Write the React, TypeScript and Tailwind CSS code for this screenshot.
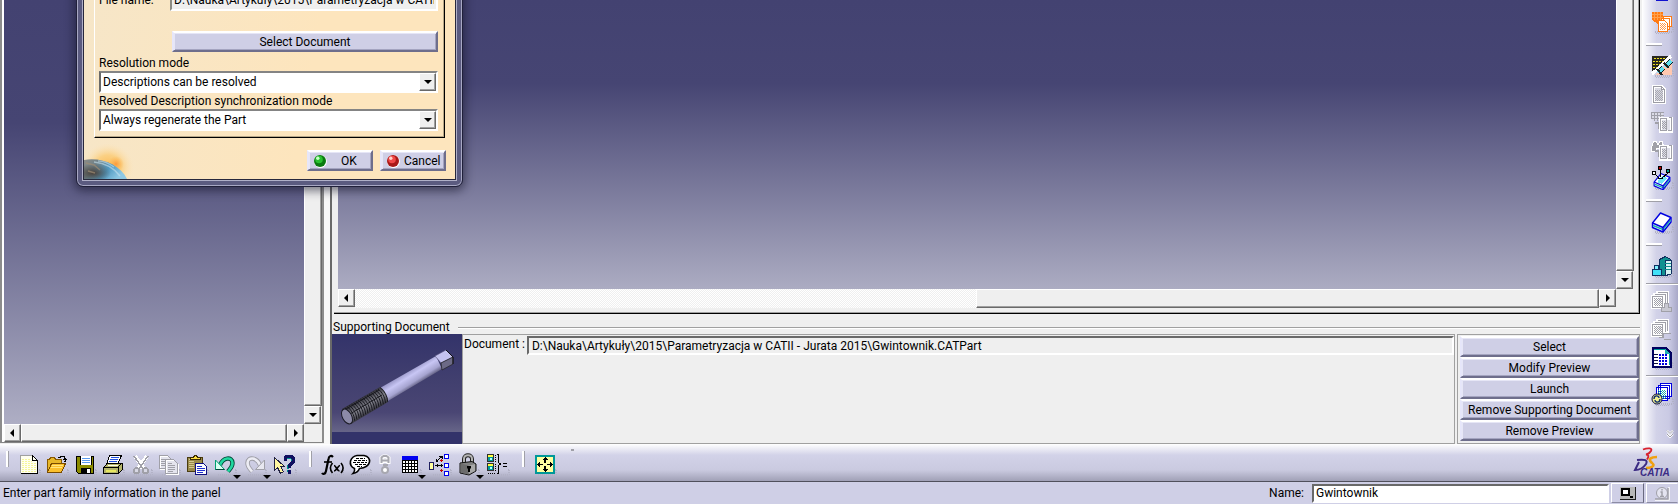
import React from "react";

type Kids = { children?: React.ReactNode };

const RAISED =
  "border border-t-white border-l-white border-r-[#696969] border-b-[#696969] bg-[#efefef] shadow-[inset_-1px_-1px_0_#a0a0a0]";
const PUSH =
  "border-2 border-t-white border-l-[#e6e6fa] border-r-[#6e6e8c] border-b-[#6e6e8c] bg-[#cfcfe6] shadow-[inset_1px_1px_0_#e6e6f6,inset_-1px_-1px_0_#a4a4c0]";

function Icon({ children, shade = true }: Kids & { shade?: boolean }) {
  return (
    <svg width="24" height="24" viewBox="0 0 24 24" shapeRendering="crispEdges" aria-hidden="true" className="shrink-0">
      {shade && <path d="M5 21h17v-5h1v6H5zM6 23h14" fill="none" stroke="#b2b2c6" strokeDasharray="1 1" />}
      {children}
    </svg>
  );
}

/* ---------- bottom toolbar icons ---------- */

const NewIcon = () => (
  <Icon>
    <path d="M4 2.5h11.5l5 5V20.5H3.5V2.500z" fill="#fffff0" />
    <path d="M5 6h9M5 8h10M5 10h14M5 12h14M5 14h14M5 16h14M5 18h14" stroke="#f6f69a" strokeDasharray="2 1" />
    <path d="M3.500 20V2.500H15.500" fill="none" stroke="#a0a0a0" />
    <path d="M15.500 2.500v5h5M15.500 2.500l5 5V20.500H3.500" fill="none" stroke="#000" />
  </Icon>
);
const OpenIcon = () => (
  <Icon>
    <path d="M2.500 19V6.500h2l1-2h4l1 2h6V10" fill="#e8b82a" stroke="#8a5a00" />
    <path d="M2.500 19.500l4-9h14l-4 9z" fill="#fbc02d" stroke="#7a4c00" />
    <path d="M7 12h11M6 14h11" stroke="#ffe680" />
    <path d="M13 4.500h2l1-1h3l1 2v2M18 6.500h4M19 8.500h2" fill="none" stroke="#000" />
  </Icon>
);
const SaveIcon = () => (
  <Icon>
    <path d="M3.500 3.500h17v17h-15l-2-2z" fill="#8c8c00" stroke="#000" />
    <path d="M7 3h11v9H7z" fill="#fff" />
    <path d="M7.500 12V3M18.500 12V3" stroke="#000" />
    <path d="M9 5.500h8M9 7.500h8M9 9.500h8" stroke="#5b9bf0" />
    <path d="M8 15h10v5H8z" fill="#000" />
    <path d="M14 16h3v4h-3z" fill="#fff" />
  </Icon>
);
const PrintIcon = () => (
  <Icon>
    <path d="M8.500 2.500h12l-4 9h-11z" fill="#fff" stroke="#000" />
    <path d="M10 4.500h8M9 6.500h8M8 8.500h8" stroke="#2050e0" strokeWidth="1" />
    <path d="M2.500 14.500l4-4h15v6l-4 4h-15z" fill="#b5b56a" stroke="#000" />
    <path d="M3 14.500h14v5M17 14l4-4" fill="none" stroke="#000" />
    <path d="M5 17.500h10" stroke="#e8e860" strokeWidth="2" />
    <path d="M7 12.500h10" stroke="#fffff0" />
  </Icon>
);
const CutIcon = () => (
  <Icon>
    <path d="M6 3l9 13M18 3L9 16" stroke="#fff" strokeWidth="4" />
    <path d="M5 3l9 13M19 3L10 16" stroke="#a0a0a8" strokeWidth="1.500" />
    <circle cx="7.500" cy="17.500" r="2.500" fill="#d8d8e4" stroke="#a0a0a8" strokeWidth="2" />
    <circle cx="16.500" cy="17.500" r="2.500" fill="#d8d8e4" stroke="#a0a0a8" strokeWidth="2" />
  </Icon>
);
const CopyIcon = () => (
  <Icon>
    <path d="M3.500 3.500h8l3 3v10h-11z" fill="#e4e4ee" stroke="#fff" />
    <path d="M2.500 2.500h8l3 3v10h-11zM4 6.500h5M4 8.500h7M4 10.500h7M4 12.500h7" fill="none" stroke="#a0a0a8" />
    <path d="M9.500 7.500h8l4 4v10h-12z" fill="#e4e4ee" stroke="#fff" />
    <path d="M8.500 6.500h8l4 4v10h-12zM11 10.500h4M11 12.500h7M11 14.500h7M11 16.500h7M11 18.500h5" fill="none" stroke="#a0a0a8" />
  </Icon>
);
const PasteIcon = () => (
  <Icon>
    <path d="M2.500 4.500h15v14h-15z" fill="#9a8a4a" stroke="#4a3c10" />
    <path d="M4 6.500h5M4 8.500h5M4 10.500h5M4 12.500h5M4 14.500h5" stroke="#d4c890" />
    <path d="M5.500 6.500v-2h3l1-2h2l1 2h3v2z" fill="#ffe040" stroke="#3a2c00" />
    <path d="M10.500 10.500h8l3 3v8h-11z" fill="#fff" stroke="#101080" />
    <path d="M12 13.500h5M12 15.500h8M12 17.500h8M12 19.500h6" stroke="#2030d0" />
  </Icon>
);
const UndoIcon = () => (
  <Icon>
    <g shapeRendering="auto">
      <path d="M7 12C10 4.500 19 3 19.500 10c0 4-2.500 6-4.500 8.500" fill="none" stroke="#004838" strokeWidth="4.400" />
      <path d="M7 12C10 4.500 19 3 19.500 10c0 4-2.500 6-4.500 8.500" fill="none" stroke="#20d8a0" strokeWidth="2.600" />
      <path d="M2.500 7v9.500h9z" fill="#d8fff0" stroke="#00a070" />
      <path d="M2.500 16.500h9" stroke="#004838" />
    </g>
  </Icon>
);
const RedoIcon = () => (
  <Icon>
    <g shapeRendering="auto">
      <path d="M17 12C14 4.500 5 3 4.500 10c0 4 2.500 6 4.500 8.500" fill="none" stroke="#9c9ca4" strokeWidth="4.400" />
      <path d="M17 12C14 4.500 5 3 4.500 10c0 4 2.500 6 4.500 8.500" fill="none" stroke="#ececf4" strokeWidth="2.600" />
      <path d="M21.500 7v9.500h-9z" fill="#e8e8f0" stroke="#a0a0a8" />
    </g>
  </Icon>
);
const HelpIcon = () => (
  <Icon>
    <path d="M12 8V5h7v5l-4 3v3M14 18h3v2" fill="none" stroke="#009090" strokeWidth="2" />
    <path d="M12 8V5l2-2h4l2 2v4l-4 4v2M16 17v4" fill="none" stroke="#101060" strokeWidth="3" />
    <path d="M1.500 4.500v13l3-3 3 6 3-2-3-5h4z" fill="#fff6a0" stroke="#202040" />
  </Icon>
);
const FxIcon = () => (
  <Icon>
    <g shapeRendering="auto" fill="none" stroke="#000">
      <path d="M13 4c-2-2-4-1-4.500 2L6 18c-.5 3-3 3.500-4 2" strokeWidth="2.200" />
      <path d="M4 9h8" strokeWidth="1.600" />
      <path d="M12.500 10c-2.500 3-2.500 7 0 10M21 10c2.500 3 2.500 7 0 10" strokeWidth="1.600" />
      <path d="M14 12.500c2 0 3 5.500 5.500 5.500M20 12.500c-2 0-3.500 5.500-6 5.500" strokeWidth="1.700" />
    </g>
  </Icon>
);
const CommentIcon = () => (
  <Icon>
    <path
      d="M9 2.500h7c4 1 6 3 5.500 6.500-1 4-5 6-10 6.500-1 2.500-3.500 4.500-6.500 5 1.500-1.500 2-3 1.500-5C3 14 2 11 2.500 8c1-3 3-5 6.500-5.500z"
      fill="#fff"
      stroke="#000"
      strokeWidth="1.600"
      shapeRendering="auto"
    />
    <path d="M8 5.500h9M6 7.500h13M5 9.500h14M7 11.500h11M9 13.500h5" stroke="#000" strokeDasharray="3 1" />
  </Icon>
);
const LinkIcon = () => (
  <Icon shade={false}>
    <g shapeRendering="auto">
      <path d="M8.500 11V5l2-1.500h3l2 1.500v6M9 8h7" fill="none" stroke="#fff" strokeWidth="4" />
      <path d="M8.500 10V4.500l2-1.500h3l2 1.500V10M9 7.500h6M10 12h5" fill="none" stroke="#a8a8b0" strokeWidth="2" />
      <circle cx="12" cy="17" r="3" fill="#fff" stroke="#a8a8b0" strokeWidth="2" />
    </g>
  </Icon>
);
const TableIcon = () => (
  <Icon>
    <path d="M4 3h16v4H4z" fill="#0000f0" />
    <path d="M4.500 7.500h15v12h-15z" fill="#fff" stroke="#000" />
    <path d="M7.500 7v12M10.500 7v12M13.500 7v12M16.500 7v12M4 10.500h16M4 13.500h16M4 16.500h16" stroke="#000" />
  </Icon>
);
const TreeIcon = () => (
  <Icon>
    <path d="M1.500 9.500h4v7h-4z" fill="#ffffa0" stroke="#202060" />
    <path d="M16.500 1.500h4v4h-4zM16.500 10.500h4v4h-4zM16.500 18.500h4v4h-4z" fill="#fff" stroke="#0000f0" />
    <path d="M8 8.500l6-5M14 3v3M14 3h-3M7 12.500h8M9 11v3M13 11v3M8 8v-2M8 8h2" fill="none" stroke="#000" />
    <path d="M12 7.500h3M13.500 6v3M12 17.500h3M13.500 16v3" stroke="#c00000" />
  </Icon>
);
const LockIcon = () => (
  <Icon>
    <g shapeRendering="auto">
      <path d="M8 11V6c0-5 8-5 8 0v4" fill="none" stroke="#202020" strokeWidth="4" />
      <path d="M8 11V6c0-5 8-5 8 0v4" fill="none" stroke="#b4b4b4" strokeWidth="2" />
      <path d="M4 10l12-1.500 4 2.500v7l-7 4-9-2z" fill="#808080" stroke="#101010" />
      <path d="M4.500 10.500l8 2v9l-8-2z" fill="#6c6c6c" />
      <path d="M12 13l7-2v7l-6 3z" fill="#a8a8a8" />
      <path d="M11 13h4v2l-1 1v3h-2v-3l-1-1z" fill="#000" />
    </g>
  </Icon>
);
const BraceIcon = () => (
  <Icon>
    <path d="M1.500 1.500h6v7h-6zM1.500 10.500h6v7h-6z" fill="#009898" stroke="#303030" />
    <path d="M2 2.500h5M2 11.500h5" stroke="#ffff40" strokeWidth="2" />
    <path d="M4 5h2v2H4zM4 14h2v2H4z" fill="#b0ffff" />
    <path d="M9.500 2v7M9.500 11v7M2 20.500h7" fill="none" stroke="#000" strokeDasharray="1 1" />
    <path d="M11 1.500h1.500v8l2 1.500-2 1.500v8H11M17 10.500h4M17 13.500h4" fill="none" stroke="#000" />
  </Icon>
);
const FitIcon = () => (
  <Icon>
    <path d="M3 3h18v17H3z" fill="#ffffa0" stroke="#009898" strokeWidth="2" />
    <path d="M12 5v5M12 13v5M5 11.500h5M14 11.500h5" stroke="#000" strokeWidth="1.500" />
    <path d="M12 4l3 3H9zM12 19l3-3H9zM4 11.500l3-3v6zM20 11.500l-3-3v6z" fill="#000" />
  </Icon>
);

/* ---------- side toolbar icons ---------- */

const Dots = ({ x, y, w, h, c }: { x: number; y: number; w: number; h: number; c: string }) => (
  <>
    {Array.from({ length: h }, (_, i) => (
      <path key={i} d={`M${x + (i % 2)} ${y + i + 0.5}h${w}`} stroke={c} strokeDasharray="1 1" />
    ))}
  </>
);
const Catalog = () => (
  <Icon>
    <path d="M2 2h11v12l-2 2-4-2-2-2-3-2z" fill="#ff7a14" />
    <path d="M2 4.500h11M2 7.500h11M4.500 2v8M7.500 2v8M10.500 2v8" stroke="#ffa04c" />
    <path d="M13.500 6.500h8v10h-8zM11.500 8.500h8v11h-8z" fill="#fff" stroke="#ff7a14" />
    <path d="M8.500 10.500h6l3 3v8h-9z" fill="#fff" stroke="#ff7a14" />
    <Dots x={10} y={13} w={6} h={7} c="#ff9a50" />
  </Icon>
);
const Gears = () => (
  <Icon>
    <path d="M2 2h20L2 20z" fill="#282820" />
    <path d="M4 4h13M3 7h12M3 10h9M3 13h6" stroke="#f0e020" strokeWidth="1" strokeDasharray="2 1" />
    <path d="M22 6v15H5z" fill="#ffc8b0" />
    <path d="M2 20L21 2" stroke="#fff" strokeWidth="3" />
    <path d="M8 19l5-5M15 13l6-6" stroke="#102020" strokeWidth="5" />
    <path d="M8 19l5-5M15 13l6-6" stroke="#60e0f0" strokeWidth="3" />
    <path d="M7 15l5 6M14 9l5 5" stroke="#202020" strokeWidth="2" />
  </Icon>
);
const PageGray = () => (
  <Icon shade={false}>
    <path d="M3.500 4.500h8l3 3v13h-11z" fill="#d8d8e2" stroke="#fff" strokeWidth="3" />
    <path d="M3.500 4.500h8l3 3v13h-11zM11.500 4.500v3h3" fill="none" stroke="#9c9ca4" />
    <Dots x={5} y={8} w={8} h={11} c="#a8a8b0" />
  </Icon>
);
const GrayDesign = ({ eye = false }: { eye?: boolean }) => (
  <Icon shade={false}>
    {eye ? (
      <path d="M1.500 9.500l2-6h3l1 3h1l1-3h3l1 6v4h-4v-3h-3v3h-5z" fill="#a0a0a8" stroke="#fff" />
    ) : (
      <>
        <path d="M2 3h11v7H2z" fill="#dcdce6" />
        <path d="M1.500 2.500h12M1.500 5.500h12M1.500 8.500h12M1.500 2v7M4.500 2v9M7.500 2v9M10.500 2v7" stroke="#a0a0a8" />
      </>
    )}
    <path d="M5 13h4v5h3" fill="none" stroke="#a0a0a8" strokeWidth="2" />
    <path d="M10.500 8.500h11v13h-11z" fill="#e0e0ea" stroke="#fff" strokeWidth="3" />
    <path d="M10.500 8.500h6v12h-6zM18.500 7.500h3v13h-4" fill="none" stroke="#a0a0a8" />
    <Dots x={12} y={11} w={4} h={8} c="#a0a0a8" />
  </Icon>
);
const Box = () => (
  <g strokeLinejoin="round" shapeRendering="auto">
    <path d="M2.500 13l8-10 10.500 4.500v4.500l-8 10-10.500-4.500z" fill="#fff" stroke="#0000e0" strokeWidth="1.400" />
    <path d="M3 15.500l10 4 7.500-9.500" fill="none" stroke="#20b0b0" strokeWidth="1.600" />
    <path d="M2.500 13l10.500 4.500 8-10M13 17.500v4" fill="none" stroke="#0000e0" strokeWidth="1.400" />
  </g>
);
const BoxIcon = () => (
  <Icon>
    <Box />
  </Icon>
);
const BoxPins = () => (
  <Icon>
    <g transform="translate(2 5) scale(.85)">
      <Box />
      <path d="M6 13l6-7 6 2-6 7z" fill="#70e8f8" />
    </g>
    <path d="M4.500 8l6 5M10.500 3v8M18 7l-6 5M8 12h5" stroke="#000" />
    <path d="M2.500 5.500h3v3h-3z" fill="#fff" stroke="#000" />
    <path d="M8.500 .5h3v3h-3z" fill="#c00000" stroke="#000" />
    <path d="M16.500 3.500h3v3h-3z" fill="#00a090" stroke="#000" />
  </Icon>
);
const Building = () => (
  <Icon>
    <path d="M9.500 5.500l6-3 5 3v14l-3 2h-8z" fill="#109090" stroke="#103060" />
    <path d="M15 6h6v14l-4 1h-2z" fill="#d8f4f4" stroke="#103060" />
    <path d="M15 9.500h6M15 12.500h6M15 15.500h6" stroke="#109090" />
    <path d="M2.500 15.500h9v6h-9z" fill="#40e0f8" stroke="#103060" />
    <path d="M4.500 11.500h4v4h-4z" fill="#80f0ff" stroke="#103060" />
  </Icon>
);
const GraySheets = ({ alt = false }: { alt?: boolean }) => (
  <Icon shade={false}>
    <path d="M7.500 2.500h10v11h-10zM4.500 4.500h11v10h-11zM2.500 6.500h10v11h-10z" fill="#dcdce6" stroke="#fff" strokeWidth="3" />
    <path d="M7.500 2.500h10v10M4.500 4.500h11v9M2.500 6.500h10v11h-10z" fill="none" stroke="#a0a0a8" />
    <Dots x={4} y={8} w={8} h={8} c="#a0a0a8" />
    {alt ? (
      <path d="M9 19.500h4v-4h8M14 21.500h7" fill="none" stroke="#a0a0a8" strokeWidth="1.500" />
    ) : (
      <path d="M11.500 17.500h3v-4h4v4h3v4h-10z" fill="#c8c8d2" stroke="#a0a0a8" strokeWidth="1.500" />
    )}
  </Icon>
);
const DesignTable = () => (
  <Icon>
    <path d="M3 2h13l5 5v14H3z" fill="#fff" stroke="#000060" strokeWidth="2" />
    <path d="M15 3v5h5z" fill="#20b0b0" />
    <path d="M4 3.500h11M19.500 8v11" stroke="#009898" />
    <path d="M4 8.500h4M4 11.500h4M4 14.500h4M4 17.500h4" stroke="#101040" />
    <path d="M9 9h9M9 12h9M9 15h9M9 18h9" stroke="#0000e0" strokeWidth="2" strokeDasharray="2 1" />
  </Icon>
);
const SyncSheets = () => (
  <Icon>
    <path d="M10.500 1.500h11v13h-11zM8.500 3.500h11v13h-11zM6.500 5.500h11v13h-11z" fill="#fff" stroke="#0000e0" />
    <Dots x={8} y={8} w={8} h={9} c="#20a8a8" />
    <g shapeRendering="auto">
      <circle cx="7" cy="17" r="5" fill="#f0f090" stroke="#101040" />
      <path d="M4 17c0-4 5-4 5-1M10 17c0 4-5 4-5 1" fill="none" stroke="#103070" strokeWidth="1.400" />
    </g>
  </Icon>
);

/* ---------- building blocks ---------- */

function Tool({ label, children, drop = false, narrow = false }: Kids & { label: string; drop?: boolean; narrow?: boolean }) {
  return (
    <button
      type="button"
      aria-label={label}
      className={`relative flex h-7 shrink-0 items-center ${drop ? "w-[30px] pl-0.5" : narrow ? "w-[22px] justify-center" : "w-7 justify-center"}`}
    >
      {children}
      {drop && (
        <span className="absolute bottom-0 right-0 border-x-4 border-t-4 border-x-transparent border-t-black" />
      )}
    </button>
  );
}

const Grip = () => <span className="h-4 w-[3px] shrink-0 border-r border-[#a0a0a8] bg-white" />;

const SideBreak = ({ full = false }: { full?: boolean }) => (
  <div className={full ? "flex h-2 w-full items-center" : "flex h-4 w-full items-center"}>
    <span className={full ? "h-0.5 w-full border-t border-[#a0a0a8] bg-white" : "h-[3px] w-4 border-b border-[#a0a0a8] bg-white"} />
  </div>
);

const arrows = {
  left: "mr-0.5 border-y-4 border-r-4 border-y-transparent border-r-black",
  right: "border-y-4 border-l-4 border-y-transparent border-l-black",
  down: "border-x-4 border-t-4 border-x-transparent border-t-black",
};

function ScrollButton({ dir }: { dir: keyof typeof arrows }) {
  return (
    <button type="button" aria-label={`Scroll ${dir}`} className={`flex h-[18px] w-[17px] shrink-0 items-center justify-center ${RAISED}`}>
      <span className={arrows[dir]} />
    </button>
  );
}

function VScroll() {
  return (
    <div className="flex w-[18px] shrink-0 flex-col items-stretch bg-[#efefef]">
      <div className={`flex-1 border-t-0 ${RAISED}`} />
      <ScrollButton dir="down" />
    </div>
  );
}

function Combo({ id, label, value }: { id: string; label: string; value: string }) {
  return (
    <div className="flex flex-col">
      <label htmlFor={id} className="h-4 leading-4">
        {label}
      </label>
      <div className="relative flex h-[22px] border-2 border-t-[#848484] border-l-[#696969] border-r-white border-b-white bg-white">
        <select id={id} defaultValue={value} className="w-full appearance-none bg-transparent px-0.5 outline-none">
          <option>{value}</option>
        </select>
        <span className={`pointer-events-none absolute inset-y-0 right-0 flex w-[17px] items-center justify-center ${RAISED}`}>
          <span className={arrows.down} />
        </span>
      </div>
    </div>
  );
}

const Ball = ({ tone }: { tone: "green" | "red" }) => (
  <svg width="14" height="14" viewBox="0 0 14 14" aria-hidden="true" className="shrink-0">
    <circle cx="7.500" cy="7.500" r="6.400" fill="#fff" />
    <circle cx="7" cy="7" r="6" fill={tone === "green" ? "#0a7a10" : "#a81818"} />
    <circle cx="6" cy="5.500" r="3.800" fill={tone === "green" ? "#28c030" : "#f04848"} />
    <circle cx="4.800" cy="4.200" r="1.700" fill={tone === "green" ? "#c8ffc8" : "#ffd0c8"} />
  </svg>
);

function Planet() {
  return (
    <svg width="52" height="38" viewBox="0 0 52 38" aria-hidden="true" className="absolute bottom-0 left-0">
      <defs>
        <radialGradient id="sun">
          <stop offset="0" stopColor="#fcb850" />
          <stop offset=".5" stopColor="#fbcb74" stopOpacity=".8" />
          <stop offset="1" stopColor="#fde4b8" stopOpacity="0" />
        </radialGradient>
        <radialGradient id="core">
          <stop offset="0" stopColor="#fc9a3c" />
          <stop offset="1" stopColor="#fcb850" stopOpacity="0" />
        </radialGradient>
        <linearGradient id="earth" x1="0" y1="0" x2="1" y2=".4">
          <stop offset="0" stopColor="#8c8c88" />
          <stop offset=".35" stopColor="#6c8088" />
          <stop offset=".65" stopColor="#4f98c0" />
          <stop offset="1" stopColor="#8ec8e4" />
        </linearGradient>
        <radialGradient id="land">
          <stop offset="0" stopColor="#4a423c" />
          <stop offset="1" stopColor="#4a423c" stopOpacity="0" />
        </radialGradient>
      </defs>
      <ellipse cx="24" cy="26" rx="26" ry="24" fill="url(#sun)" />
      <circle cx="32" cy="23" r="8" fill="url(#core)" />
      <path d="M0 19c18-3 36 5 43 19H0z" fill="url(#earth)" />
      <ellipse cx="9" cy="32" rx="18" ry="9" fill="url(#land)" />
      <path d="M10 21c10 1 20 6 26 14M14 20c6 0 12 3 16 6" fill="none" stroke="#c4e0ec" strokeOpacity=".6" strokeWidth="1.500" />
      <path d="M2 22l8 2 6 5M4 30l7 2" stroke="#a08c74" strokeOpacity=".7" strokeWidth="1.500" fill="none" />
    </svg>
  );
}

function Dialog() {
  return (
    <section
      aria-label="Document selection"
      className="absolute -top-3 left-[76px] w-[387px] rounded-b-[7px] border border-[#20203a] bg-[#5b5b80] px-[5px] pb-[5px] shadow-[inset_0_0_0_1px_#a8a8c4,0_2px_10px_2px_rgba(20,20,40,0.55)]"
    >
      <div className="border-x border-b border-[#b0b0c8]">
        <div className="relative border-x border-b border-[#28283c] bg-[linear-gradient(100deg,#f6e6c8,#fde5bd_60%)] px-2.5 pb-2">
          <div className="mb-3 flex flex-col border-b border-l border-r border-b-black border-l-white border-r-black pb-1.5 pl-1 pr-1.5 shadow-[inset_-1px_-1px_0_#b8a888]">
            <div className="mb-5 flex h-[22px] items-center">
              <label htmlFor="file" className="w-[71px] shrink-0">
                File name:
              </label>
              <input
                id="file"
                readOnly
                defaultValue="D:\Nauka\Artykuły\2015\Parametryzacja w CATII - Jurata 2015\Gwintownik.CATPart"
                className="h-[22px] w-full min-w-0 border-2 border-t-[#848484] border-l-[#8c8c84] border-r-white border-b-white bg-[#efefef] px-0.5 outline-none"
              />
            </div>
            <button type="button" className={`mb-[3px] ml-[73px] h-[21px] leading-4 ${PUSH}`}>
              Select Document
            </button>
            <Combo id="resolution" label="Resolution mode" value="Descriptions can be resolved" />
            <Combo id="sync" label="Resolved Description synchronization mode" value="Always regenerate the Part" />
          </div>
          <Planet />
          <div className="relative -mr-px flex justify-end gap-[7px]">
            <button type="button" className={`flex h-[21px] w-[66px] items-center pl-1 ${PUSH}`}>
              <Ball tone="green" />
              <span className="flex-1 text-center">OK</span>
            </button>
            <button type="button" className={`flex h-[21px] w-[66px] items-center gap-1 pl-1 ${PUSH}`}>
              <Ball tone="red" />
              Cancel
            </button>
          </div>
        </div>
      </div>
    </section>
  );
}

function Preview() {
  return (
    <svg viewBox="0 0 130 110" width="130" height="110" role="img" aria-label="Tap preview" className="block shrink-0">
      <defs>
        <linearGradient id="sky" x1="0" y1="0" x2="0" y2="1">
          <stop offset="0" stopColor="#33336a" />
          <stop offset=".5" stopColor="#42406f" />
          <stop offset=".8" stopColor="#4a4674" />
          <stop offset="1" stopColor="#676588" />
        </linearGradient>
        <linearGradient id="shank" gradientUnits="userSpaceOnUse" x1="74" y1="38" x2="84" y2="54">
          <stop offset="0" stopColor="#9a98c8" />
          <stop offset=".3" stopColor="#c8c6f4" />
          <stop offset=".65" stopColor="#a6a4d0" />
          <stop offset="1" stopColor="#3c3a58" />
        </linearGradient>
        <linearGradient id="thread" gradientUnits="userSpaceOnUse" x1="28" y1="64" x2="39" y2="82">
          <stop offset="0" stopColor="#2c2c34" />
          <stop offset=".45" stopColor="#82828c" />
          <stop offset="1" stopColor="#18181e" />
        </linearGradient>
      </defs>
      <rect width="130" height="98" fill="url(#sky)" />
      <rect y="98" width="130" height="12" fill="#33336a" />
      <path d="M48 54L104 22l6 13-54 32z" fill="url(#shank)" />
      <path d="M103 22l11-6 7 7-12 6z" fill="#c4c2ee" stroke="#55537a" strokeWidth=".6" />
      <path d="M109 29l12-6v7l-11 6z" fill="#6c6a86" stroke="#222" strokeWidth=".7" />
      <path d="M114 16l7 7v7" fill="none" stroke="#111" />
      <path d="M10 75L48 53c5 3 8 9 8 15L19 90c-6-2-9-8-9-15z" fill="url(#thread)" />
      {Array.from({ length: 17 }, (_, i) => (
        <path key={i} d={`M${13 + i * 2.200} ${74 - i * 1.270}c4 3 7 8 7.500 14`} fill="none" stroke="#111118" strokeWidth=".9" />
      ))}
      <path d="M14 75L47 56M18 80L50 61" stroke="#18181e" />
      <ellipse cx="15" cy="82.500" rx="4.600" ry="8" transform="rotate(-28 15 82.500)" fill="#8c8aa8" stroke="#1c1c26" />
    </svg>
  );
}

function Logo() {
  return (
    <svg width="42" height="32" viewBox="0 0 42 32" role="img" aria-label="CATIA" className="shrink-0">
      <path d="M11 2.500c5-2 10-1.500 8 1.500-1 2-3 3-5 3.500 3 0 3 2 1 5" fill="none" stroke="#d8202c" strokeWidth="1.800" />
      <path d="M5 13c8-1 11 0 9 4-2 3-6 6-11 6l4-8" fill="none" stroke="#3c2c84" strokeWidth="2" />
      <path d="M25 10c-6 0-9 2-6 5 2 2 4 3 1 5-2 1-4 1-6 1" fill="none" stroke="#f0a010" strokeWidth="2.600" />
      <text x="8" y="29" fontFamily="Liberation Sans, Arial, sans-serif" fontSize="10" fontWeight="700" fontStyle="italic" fill="#3c2c84">
        CATIA
      </text>
    </svg>
  );
}

const ACTIONS = ["Select", "Modify Preview", "Launch", "Remove Supporting Document", "Remove Preview"];

export default function App() {
  return (
    <div className="relative flex h-screen flex-col overflow-hidden bg-[#efefef] font-[Roboto,'Noto_Sans',sans-serif] text-[12px] leading-4 text-black">
      <div className="flex min-h-0 flex-1">
        {/* specification tree */}
        <div className="mb-px flex w-[324px] shrink-0 flex-col border-x-2 border-b border-l-[#8c8c8c] border-r-[#8c8c8c] border-b-[#848484]">
          <div className="flex min-h-0 flex-1 border-l-2 border-white">
            <div className="flex-1 bg-[linear-gradient(#434271,#464573_29%,#aeaec4)]" />
            <VScroll />
          </div>
          <div className="flex h-[18px] border-l-2 border-white pr-[18px]">
            <ScrollButton dir="left" />
            <div className={`flex-1 ${RAISED}`} />
            <ScrollButton dir="right" />
          </div>
        </div>
        <div className="w-2 shrink-0 border-r-2 border-[#696969] bg-[#f8f8f8]" />

        {/* document area */}
        <main className="flex min-w-0 flex-1 flex-col">
          <div className="ml-0.5 flex min-h-0 flex-1 flex-col border-b border-r border-black pb-[5px] pl-1 pr-[5px] shadow-[inset_-1px_-1px_0_#a0a0a0]">
            <div className="flex min-h-0 flex-1">
              <div className="flex-1 bg-[linear-gradient(#434271,#464573_29%,#acacc2)]" />
              <VScroll />
            </div>
            <div className="flex h-[19px] pr-[18px]">
              <ScrollButton dir="left" />
              <div className="flex-1 bg-[repeating-conic-gradient(#efefef_0_25%,#fff_0_50%)] bg-[length:2px_2px]" />
              <div className={`flex-1 ${RAISED}`} />
              <ScrollButton dir="right" />
            </div>
          </div>
          <div className="flex h-5 items-end gap-2 pl-px">
            <h2 className="shrink-0 leading-[14px]">Supporting Document</h2>
            <span className="mb-[5px] h-0.5 flex-1 border-t border-[#a0a0a0] bg-white" />
          </div>
          <div className="flex">
            <Preview />
            <div className="flex min-w-0 flex-1 items-start border border-[#a0a0a0] pl-px pt-px">
              <label htmlFor="doc" className="shrink-0 pr-0.5">
                Document :
              </label>
              <input
                id="doc"
                readOnly
                defaultValue="D:\Nauka\Artykuły\2015\Parametryzacja w CATII - Jurata 2015\Gwintownik.CATPart"
                className="h-[19px] min-w-0 flex-1 border-2 border-t-[#696969] border-l-[#696969] border-r-white border-b-white bg-[#efefef] px-[3px] outline-none"
              />
            </div>
            <div className="ml-0.5 flex w-[183px] shrink-0 flex-col border border-[#a0a0a0] pl-0.5 pt-px">
              {ACTIONS.map((a) => (
                <button key={a} type="button" className={`h-[21px] whitespace-nowrap leading-4 ${PUSH}`}>
                  {a}
                </button>
              ))}
            </div>
          </div>
        </main>

        {/* side toolbar */}
        <nav aria-label="Part tools" className="ml-0.5 flex w-9 shrink-0 flex-col items-center overflow-hidden bg-[linear-gradient(90deg,#fff,#d2d2e8_40%,#cacae4_75%,#a8a8c8)] pl-1">
          <div className="flex h-2 items-start">
            <span className="h-px w-3 bg-[#1010d0]" />
          </div>
          <Tool label="Catalog"><Catalog /></Tool>
          <SideBreak />
          <Tool label="Resolve part"><Gears /></Tool>
          <Tool label="New document"><PageGray /></Tool>
          <Tool label="Design"><GrayDesign /></Tool>
          <Tool label="Find design"><GrayDesign eye /></Tool>
          <Tool label="Components"><BoxPins /></Tool>
          <SideBreak />
          <Tool label="Part"><BoxIcon /></Tool>
          <SideBreak />
          <Tool label="Family"><Building /></Tool>
          <SideBreak full />
          <Tool label="Add sheets"><GraySheets /></Tool>
          <Tool label="Link sheets"><GraySheets alt /></Tool>
          <Tool label="Design table"><DesignTable /></Tool>
          <SideBreak full />
          <Tool label="Synchronize"><SyncSheets /></Tool>
          <svg width="8" height="8" viewBox="0 0 8 8" aria-hidden="true" className="mb-1.5 mr-1 mt-auto self-end">
            <path d="M1 .5l3 3 3-3M1 4l3 3 3-3" fill="none" stroke="#fff" strokeWidth="2" />
            <path d="M1 .5l3 3 3-3M1 4l3 3 3-3" fill="none" stroke="#a0a0a8" />
          </svg>
        </nav>
      </div>

      {/* main toolbar */}
      <div role="toolbar" aria-label="Standard" className="flex h-[38px] shrink-0 items-start border-b border-[#50505c] bg-[linear-gradient(#fff,#d2d2e8_30%,#cacae0_70%,#a0a0b6)] pl-1.5 pr-1 pt-[7px]">
        <Grip />
        <div className="ml-1.5 flex">
          <Tool label="New"><NewIcon /></Tool>
          <Tool label="Open"><OpenIcon /></Tool>
          <Tool label="Save"><SaveIcon /></Tool>
          <Tool label="Print"><PrintIcon /></Tool>
          <Tool label="Cut"><CutIcon /></Tool>
          <Tool label="Copy"><CopyIcon /></Tool>
          <Tool label="Paste"><PasteIcon /></Tool>
          <Tool label="Undo" drop><UndoIcon /></Tool>
          <Tool label="Redo" drop><RedoIcon /></Tool>
          <Tool label="What's this"><HelpIcon /></Tool>
        </div>
        <div className="ml-2.5 flex">
          <Grip />
        </div>
        <div className="ml-1.5 flex">
          <Tool label="Formula"><FxIcon /></Tool>
          <Tool label="Comment"><CommentIcon /></Tool>
          <Tool label="Links" narrow><LinkIcon /></Tool>
          <Tool label="Table" drop><TableIcon /></Tool>
          <Tool label="Relations"><TreeIcon /></Tool>
          <Tool label="Lock" drop><LockIcon /></Tool>
          <Tool label="Equivalent dimensions"><BraceIcon /></Tool>
        </div>
        <div className="ml-2.5 flex">
          <Grip />
        </div>
        <div className="ml-1.5 flex">
          <Tool label="Fit all"><FitIcon /></Tool>
        </div>
        <span className="-mt-0.5 ml-3 h-0.5 w-[3px] bg-[#a0a0a8]" />
        <div className="-mt-1 ml-auto">
          <Logo />
        </div>
      </div>

      {/* status bar */}
      <footer className="flex h-[22px] shrink-0 items-center bg-[#cfcfe6] pl-[3px]">
        <p className="flex-1">Enter part family information in the panel</p>
        <label htmlFor="name" className="mr-2">
          Name:
        </label>
        <input
          id="name"
          defaultValue="Gwintownik"
          className="h-[19px] w-[297px] border-2 border-t-[#696969] border-l-[#696969] border-r-white border-b-white bg-white px-0.5 outline-none"
        />
        <button type="button" aria-label="Restore panel" className="ml-0.5 flex h-5 w-[33px] items-center justify-center border border-l-white border-t-white border-b-[#8c8ca4] border-r-[#696980]">
          <svg width="16" height="13" viewBox="0 0 16 13" shapeRendering="crispEdges" aria-hidden="true">
            <path d="M0 0h16v13H0z" fill="#b8b8b8" />
            <path d="M15.500 0v12.500H0" fill="none" stroke="#202020" />
            <path d="M2 2h7v6H2z" fill="#fff" stroke="#000" strokeWidth="2" />
            <path d="M10 9h3v2h-3z" fill="#000" />
          </svg>
        </button>
        <button type="button" aria-label="Information" className="ml-0.5 flex h-5 w-8 items-center justify-center border border-l-white border-t-white border-b-[#8c8ca4] border-r-[#cfcfe6]">
          <svg width="17" height="15" viewBox="0 0 17 15" aria-hidden="true">
            <path d="M1 14h14V1" fill="none" stroke="#fff" strokeWidth="1.500" />
            <circle cx="8" cy="7" r="5.500" fill="#e4e4f0" stroke="#a0a0a8" />
            <path d="M8 3v1.500M6.500 6H8v4M6 10.500h4M1 13h13V2" fill="none" stroke="#a0a0a8" strokeWidth="1.500" />
          </svg>
        </button>
      </footer>

      <Dialog />
    </div>
  );
}
